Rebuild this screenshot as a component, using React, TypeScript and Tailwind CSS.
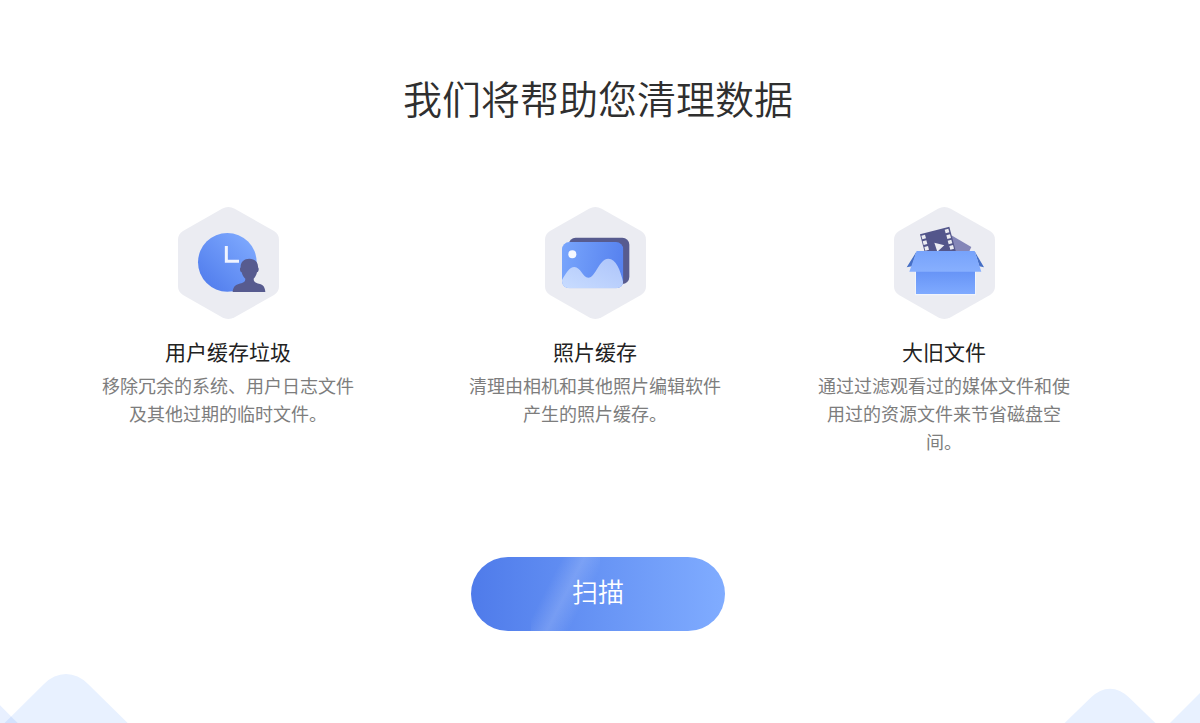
import type { ReactNode } from 'react';

interface Feature {
  id: string;
  title: string;
  description: string;
  icon: ReactNode;
}

function Hexagon({ children }: { children: ReactNode }) {
  return (
    <svg viewBox="30 27 303 336" className="h-28 w-[101px]" aria-hidden="true">
      <path
        d="M162 32Q181 22 200 32L318 99Q333 108 333 125V265Q333 282 318 291L200 358Q181 368 162 358L45 291Q30 282 30 265V125Q30 108 45 99Z"
        fill="#ebecf2"
      />
      {children}
    </svg>
  );
}

function JunkIcon() {
  return (
    <Hexagon>
      <defs>
        <linearGradient id="clock" x1="0.15" y1="0.85" x2="0.85" y2="0.15">
          <stop offset="0" stopColor="#5480ee" />
          <stop offset="1" stopColor="#7ba6fd" />
        </linearGradient>
      </defs>
      <circle cx="178" cy="193" r="88" fill="url(#clock)" />
      <path d="M175 144V190H213" fill="none" stroke="#f0f4ff" strokeWidth="9" />
      <path
        d="M194 282C195 268 201 261 212 258C224 254 232 253 232 242C227 238 223 232 221 223C216 221 214 211 218 208C217 192 228 182 244 182C260 182 271 192 270 208C274 211 272 221 267 223C265 232 261 238 257 242C257 253 264 254 276 258C286 261 291 268 292 282Z"
        fill="#575b8f"
      />
    </Hexagon>
  );
}

function PhotoIcon() {
  return (
    <Hexagon>
      <defs>
        <linearGradient id="photo" x1="1" y1="0.2" x2="0" y2="0.1">
          <stop offset="0" stopColor="#5782ef" />
          <stop offset="1" stopColor="#78a5fc" />
        </linearGradient>
        <linearGradient id="hills" x1="0" y1="1" x2="1" y2="0">
          <stop offset="0" stopColor="#c8dcff" />
          <stop offset="1" stopColor="#adc4fa" />
        </linearGradient>
        <clipPath id="photo-frame">
          <rect x="81" y="132" width="184" height="139" rx="22" />
        </clipPath>
      </defs>
      <rect x="101" y="119" width="182" height="139" rx="21" fill="#575b8f" />
      <g clipPath="url(#photo-frame)">
        <rect x="81" y="132" width="184" height="139" fill="url(#photo)" />
        <path
          d="M81 246C92 226 104 207 118 207C137 207 143 239 160 239C182 239 192 182 220 182C243 182 256 216 265 254V271H81Z"
          fill="url(#hills)"
        />
      </g>
      <circle cx="112" cy="169" r="12" fill="#f5f8ff" />
    </Hexagon>
  );
}

function BoxIcon() {
  return (
    <Hexagon>
      <defs>
        <linearGradient id="box" x1="0" y1="0" x2="0" y2="1">
          <stop offset="0" stopColor="#6693f6" />
          <stop offset="1" stopColor="#7faaff" />
        </linearGradient>
        <linearGradient id="flap" x1="0" y1="0" x2="0" y2="1">
          <stop offset="0" stopColor="#77a3fb" />
          <stop offset="1" stopColor="#87affe" />
        </linearGradient>
      </defs>
      <path d="M202 112L262 147L254 164H205Z" fill="#8486b8" />
      <path d="M108 109L196 86L216 162H122Z" fill="#53568b" />
      <path
        d="M112 113L123 110L126 121L115 124ZM116 130L127 127L130 138L119 141ZM121 147L132 144L135 155L124 158ZM182 95L193 92L196 103L185 106ZM187 112L198 109L201 120L190 123ZM191 128L202 125L205 136L194 139ZM196 144L207 141L210 152L199 155Z"
        fill="#ebecf2"
      />
      <path d="M151 134L181 142L160 161Z" fill="#ebecf2" />
      <path d="M98 160L68 208L84 205ZM272 160L300 208L286 205Z" fill="#466fc5" />
      <rect x="93" y="220" width="183" height="72" fill="#f1f4fb" />
      <rect x="96" y="218" width="177" height="70" fill="url(#box)" />
      <path d="M98 159H272L292 221H76Z" fill="url(#flap)" />
    </Hexagon>
  );
}

const features: Feature[] = [
  {
    id: 'junk',
    title: '用户缓存垃圾',
    description: '移除冗余的系统、用户日志文件及其他过期的临时文件。',
    icon: <JunkIcon />,
  },
  {
    id: 'photos',
    title: '照片缓存',
    description: '清理由相机和其他照片编辑软件产生的照片缓存。',
    icon: <PhotoIcon />,
  },
  {
    id: 'files',
    title: '大旧文件',
    description: '通过过滤观看过的媒体文件和使用过的资源文件来节省磁盘空间。',
    icon: <BoxIcon />,
  },
];

function FeatureCard({ feature }: { feature: Feature }) {
  return (
    <li className="flex w-64 flex-col items-center text-center first:lg:mr-[18px]">
      {feature.icon}
      <h2 className="mt-4 mb-1 text-[21px] leading-8 text-[#222222]">{feature.title}</h2>
      <p className="text-[18px] leading-7 text-[#7d7d7d]">{feature.description}</p>
    </li>
  );
}

export default function App() {
  return (
    <div className="flex min-h-screen flex-col bg-white font-['Noto_Sans_CJK_SC','Noto_Sans',sans-serif]">
      <main className="flex flex-col items-center pt-[69px]">
        <h1 className="pr-1 text-[39px] leading-[56px] font-[350] text-[#2f2f2f]">我们将帮助您清理数据</h1>

        <ul className="mt-[82px] flex flex-wrap justify-center gap-x-[93px] gap-y-12 pr-7">
          {features.map((feature) => (
            <FeatureCard key={feature.id} feature={feature} />
          ))}
        </ul>

        {/* Scan */}
        <div className="mt-[102px] pr-1">
          <button
            type="button"
            className="relative h-[74px] w-[254px] overflow-hidden rounded-full bg-linear-to-r from-[#4f7bea] to-[#80acff] pb-2 text-[26px] font-[350] text-white"
          >
            <svg viewBox="0 0 254 74" className="absolute inset-0 h-full w-full" aria-hidden="true">
              <defs>
                <linearGradient id="shine" gradientUnits="userSpaceOnUse" x1="75" y1="32" x2="110" y2="50">
                  <stop offset="0" stopColor="#ffffff" stopOpacity="0" />
                  <stop offset="0.5" stopColor="#ffffff" stopOpacity="0.15" />
                  <stop offset="1" stopColor="#ffffff" stopOpacity="0" />
                </linearGradient>
              </defs>
              <path d="M60 0H129V74H60Z" fill="url(#shine)" />
            </svg>
            <span className="relative">扫描</span>
          </button>
        </div>
      </main>

      {/* Hills */}
      <footer className="mt-auto flex items-end justify-between">
        <svg viewBox="0 30 384 150" className="h-[50px] w-32" aria-hidden="true">
          <path d="M14 180L132 63Q162 33 198 33Q234 33 264 63L383 180Z" fill="#e8f1ff" />
          <path d="M0 127L53 180H0Z" fill="#d8e6ff" fillOpacity="0.6" />
          <path d="M33 161L53 180H14Z" fill="#d3e2fd" />
        </svg>
        <svg viewBox="42 30 408 150" className="h-[50px] w-[136px]" aria-hidden="true">
          <path d="M44 180L122 104Q150 77 180 77Q210 77 238 104L316 180ZM360 180L450 90V180Z" fill="#e8f1ff" />
        </svg>
      </footer>
    </div>
  );
}
